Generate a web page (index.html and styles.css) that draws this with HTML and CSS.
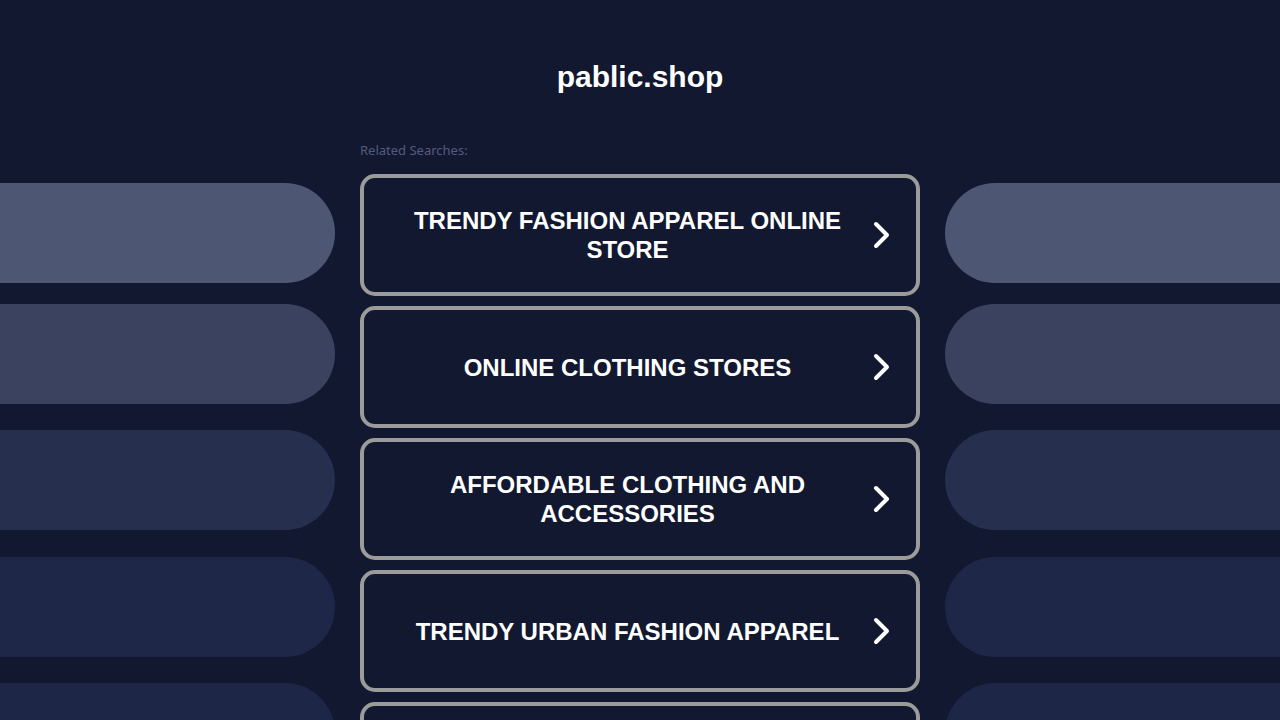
FILE: index.html
```html
<!DOCTYPE html>
<html lang="en">
<head>
<meta charset="utf-8">
<title>pablic.shop</title>
<link rel="stylesheet" href="styles.css">
</head>
<body>
<header class="header">
  <h1 class="title">pablic.shop</h1>
</header>
<main class="layout">
  <div class="side side-left">
    <div class="pill pill-1"></div>
    <div class="pill pill-2"></div>
    <div class="pill pill-3"></div>
    <div class="pill pill-4"></div>
    <div class="pill pill-5"></div>
  </div>
  <section class="center">
    <div class="label">Related Searches:</div>
    <div class="cards">
      <a class="card" href="#"><span class="card-text">TRENDY FASHION APPAREL ONLINE STORE</span><svg class="chev" viewBox="0 0 21 28" width="21" height="28"><path d="M5 3 L16 14 L5 25" /></svg></a>
      <a class="card" href="#"><span class="card-text">ONLINE CLOTHING STORES</span><svg class="chev" viewBox="0 0 21 28" width="21" height="28"><path d="M5 3 L16 14 L5 25" /></svg></a>
      <a class="card" href="#"><span class="card-text">AFFORDABLE CLOTHING AND ACCESSORIES</span><svg class="chev" viewBox="0 0 21 28" width="21" height="28"><path d="M5 3 L16 14 L5 25" /></svg></a>
      <a class="card" href="#"><span class="card-text">TRENDY URBAN FASHION APPAREL</span><svg class="chev" viewBox="0 0 21 28" width="21" height="28"><path d="M5 3 L16 14 L5 25" /></svg></a>
      <a class="card" href="#"><span class="card-text"></span></a>
    </div>
  </section>
  <div class="side side-right">
    <div class="pill pill-1"></div>
    <div class="pill pill-2"></div>
    <div class="pill pill-3"></div>
    <div class="pill pill-4"></div>
    <div class="pill pill-5"></div>
  </div>
</main>
</body>
</html>
```
FILE: styles.css
```css
html, body {
  margin: 0;
  padding: 0;
  height: 720px;
  overflow: hidden;
}
body {
  background: #121830;
  font-family: "Liberation Sans", Arial, sans-serif;
  color: #ffffff;
}
.header {
  padding-top: 59px;
  text-align: center;
}
.title {
  margin: 0;
  font-size: 30px;
  line-height: 36px;
  font-weight: 700;
  color: #ffffff;
}
.layout {
  display: grid;
  grid-template-columns: 335px 560px 335px;
  column-gap: 25px;
}
.side {
  display: flex;
  flex-direction: column;
  padding-top: 88px;
  gap: 26px;
}
.pill {
  height: 100px;
  flex: none;
}
.side-left .pill {
  border-radius: 0 50px 50px 0;
}
.side-right .pill {
  border-radius: 50px 0 0 50px;
}
.pill-1 { background: #4d5673; margin-bottom: -5px; }
.pill-2 { background: #3a4260; }
.pill-3 { background: #272f4f; margin-bottom: 1px; }
.pill-4 { background: #1e2748; }
.pill-5 { background: #1d2646; }
.center {
  display: flex;
  flex-direction: column;
}
.label {
  margin-top: 48px;
  font-family: "Noto Sans", "Liberation Sans", sans-serif;
  font-size: 13px;
  line-height: 15px;
  color: #525c7c;
  margin-bottom: 16px;
}
.cards {
  display: flex;
  flex-direction: column;
  gap: 10px;
}
.card {
  box-sizing: border-box;
  height: 122px;
  border: 4px solid #9b9b9b;
  border-radius: 15px;
  display: flex;
  align-items: center;
  padding: 0 24px 0 20px;
  text-decoration: none;
  color: #ffffff;
  background: #121830;
}
.card-text {
  flex: 1;
  text-align: center;
  font-size: 24px;
  font-weight: 700;
  line-height: 29px;
}
.chev {
  flex: none;
  display: block;
}
.chev path {
  fill: none;
  stroke: #ffffff;
  stroke-width: 4;
  stroke-linecap: round;
  stroke-linejoin: round;
}
```
